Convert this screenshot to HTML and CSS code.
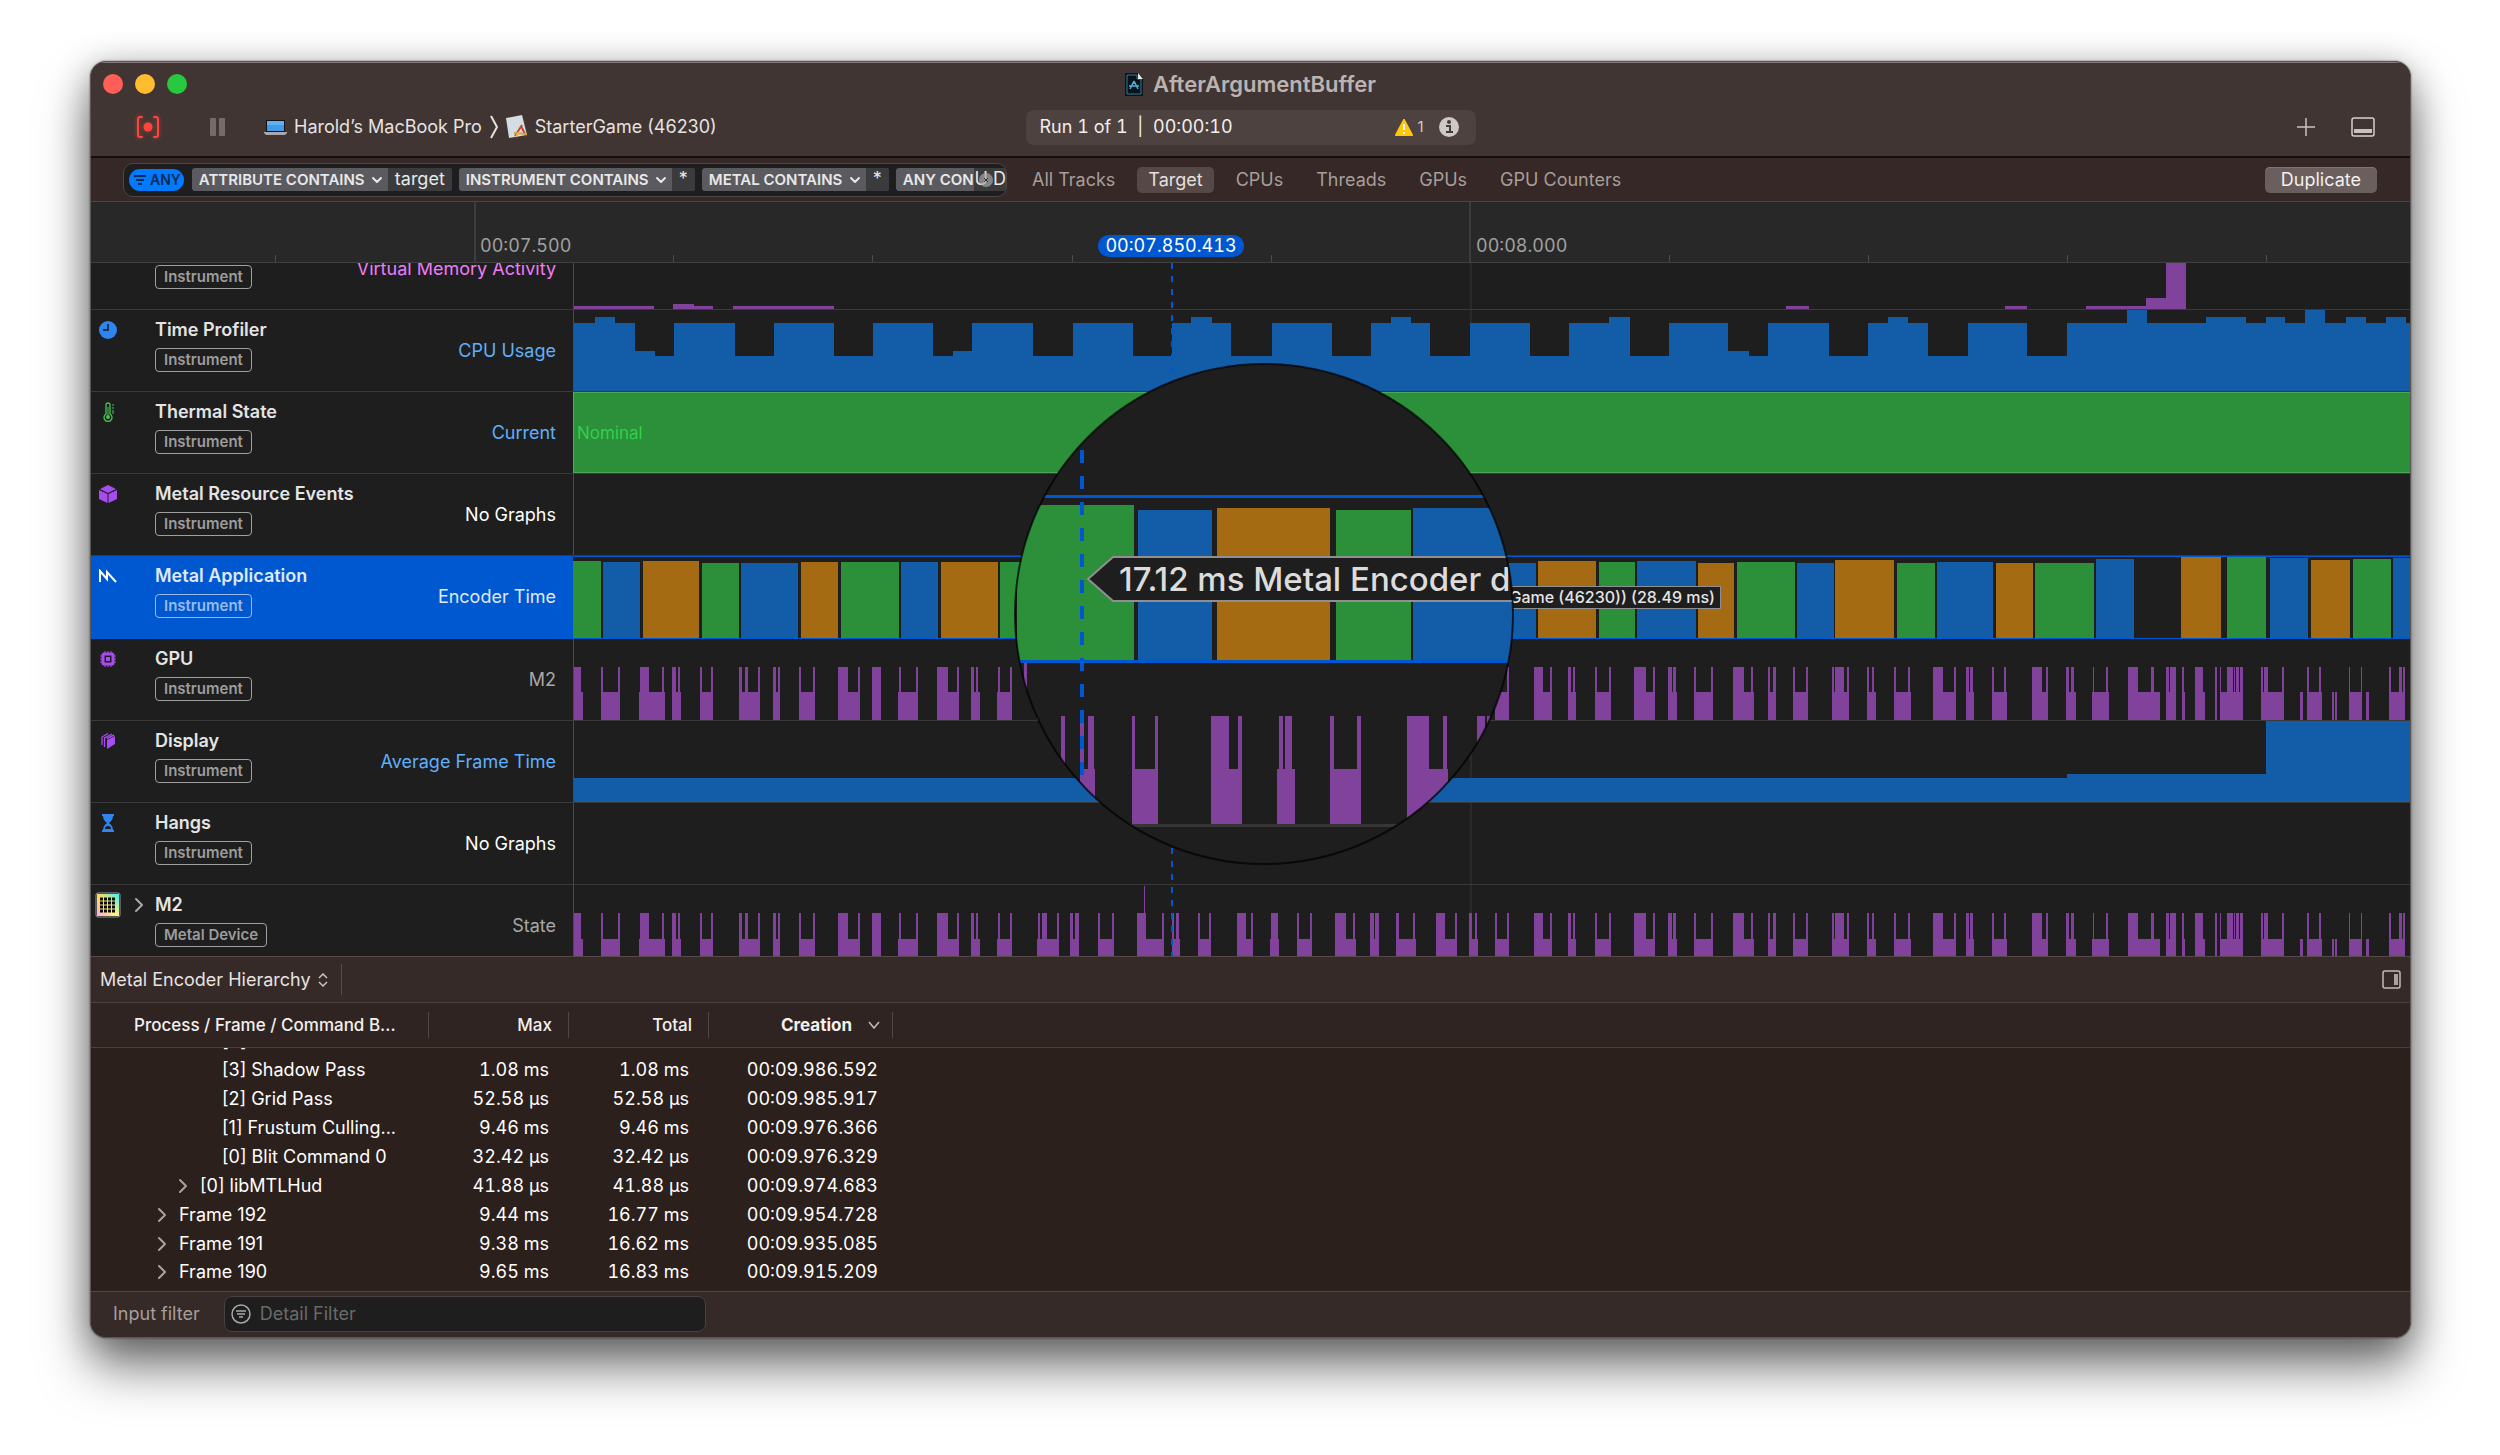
FILE: index.html
```html
<!DOCTYPE html>
<html lang="en">
<head>
<meta charset="utf-8">
<title>AfterArgumentBuffer</title>
<link rel="stylesheet" href="styles.css">
</head>
<body>
<svg class="defs" aria-hidden="true">
  <symbol id="chev-right" viewBox="0 0 10 16"><path d="M2 2l6 6-6 6" fill="none" stroke="currentColor" stroke-width="2" stroke-linecap="round" stroke-linejoin="round"/></symbol>
  <symbol id="chev-down" viewBox="0 0 12 8"><path d="M2 2l4 4 4-4" fill="none" stroke="currentColor" stroke-width="2" stroke-linecap="round" stroke-linejoin="round"/></symbol>
</svg>
<main class="window">
  <header class="titlebar">
    <div class="title-row">
      <div class="lights">
        <button class="light red" aria-label="Close"></button>
        <button class="light yellow" aria-label="Minimize"></button>
        <button class="light green" aria-label="Zoom"></button>
      </div>
      <h1 class="title">
        <svg width="18" height="23" viewBox="0 0 18 23"><path d="M0 0h13l5 5v18H0z" fill="#0b1218"/><path d="M2 2h10v4h4v15H2z" fill="none" stroke="#2d7f9e" stroke-width="1"/><path d="M13 0l5 6h-5z" fill="#e8e8e8"/><path d="M9 8l-4 8M9 8l4 8M4 13h10M9 8v3" stroke="#49b4d8" stroke-width="1.500" fill="none"/></svg>
        <span>AfterArgumentBuffer</span>
      </h1>
    </div>
    <div class="tool-row">
      <div class="tools-left">
        <button class="icon-btn record" aria-label="Record"><svg width="24" height="22" viewBox="0 0 24 22"><path d="M6 1H4Q2 1 2 3v16q0 2 2 2h2M18 1h2q2 0 2 2v16q0 2-2 2h-2" fill="none" stroke="#ff453a" stroke-width="2" stroke-linecap="round"/><circle cx="12" cy="11" r="4.500" fill="#ff453a"/></svg></button>
        <button class="icon-btn pause" aria-label="Pause"><svg width="16" height="18" viewBox="0 0 16 18"><rect width="6" height="18" rx="1" fill="#756b69"/><rect x="9" width="6" height="18" rx="1" fill="#756b69"/></svg></button>
        <button class="target-btn"><svg width="23" height="15" viewBox="0 0 23 15"><rect x="2" y="0" width="19" height="12" rx="1" fill="#111"/><rect x="3" y="1" width="17" height="10" fill="#3f9be6"/><path d="M3 1h17v4H3z" fill="#5fb2f0"/><path d="M0 12h23v1l-2 2H2l-2-2z" fill="#a9a9ab"/></svg><span>Harold’s MacBook Pro</span></button>
        <svg class="crumb" width="10" height="24" viewBox="0 0 10 24"><path d="M2 1l6 11-6 11" fill="none" stroke="#e6e2e1" stroke-width="2"/></svg>
        <button class="target-btn"><svg width="22" height="24" viewBox="0 0 22 24"><path d="M0 3L16 0l5 20L3 23z" fill="#d3dde2"/><path d="M9 21l7-11M20 21l-5-10" stroke="#c8452c" stroke-width="2"/><path d="M8 18l13 1" stroke="#d9a23c" stroke-width="2"/><path d="M10 22l3-5" stroke="#e9b550" stroke-width="2"/></svg><span>StarterGame (46230)</span></button>
      </div>
      <div class="status">
        <span class="run">Run 1 of 1&nbsp; |&nbsp; 00:00:10</span>
        <span class="issues"><svg width="18" height="17" viewBox="0 0 18 17"><path d="M9 1l8 15H1z" fill="#ffc60a" stroke="#ffc60a" stroke-width="2" stroke-linejoin="round"/><path d="M9 5v6M9 13v2" stroke="#fff" stroke-width="2"/></svg>1</span>
        <svg class="info" width="20" height="20" viewBox="0 0 20 20"><circle cx="10" cy="10" r="10" fill="#cfc8c6"/><circle cx="10" cy="5" r="2" fill="#463b39"/><path d="M7 9h4v6M7 15h7" fill="none" stroke="#463b39" stroke-width="2"/></svg>
      </div>
      <div class="tools-right">
        <button class="icon-btn" aria-label="Add instrument"><svg width="18" height="18" viewBox="0 0 18 18"><path d="M9 0v18M0 9h18" stroke="#c9c2c0" stroke-width="1.500"/></svg></button>
        <button class="icon-btn" aria-label="Toggle detail area"><svg width="24" height="20" viewBox="0 0 24 20"><rect x="1" y="1" width="22" height="18" rx="2" fill="none" stroke="#d6cfcd" stroke-width="1.500"/><rect x="3" y="12" width="18" height="4" fill="#c9c1bf"/></svg></button>
      </div>
    </div>
  </header>

  <nav class="filterbar">
    <div class="tokens">
      <button class="any"><svg width="12" height="10" viewBox="0 0 12 10"><path d="M0 1h12M2 5h8M4 9h4" stroke="#0b2a55" stroke-width="2"/></svg>ANY</button>
      <div class="token"><select aria-label="Attribute rule"><option>ATTRIBUTE CONTAINS</option></select><svg width="12" height="8"><use href="#chev-down"/></svg><span class="val">target</span></div>
      <div class="token"><select aria-label="Instrument rule"><option>INSTRUMENT CONTAINS</option></select><svg width="12" height="8"><use href="#chev-down"/></svg><span class="val">*</span></div>
      <div class="token"><select aria-label="Metal rule"><option>METAL CONTAINS</option></select><svg width="12" height="8"><use href="#chev-down"/></svg><span class="val">*</span></div>
      <div class="token last"><span class="cut">ANY CON</span><span class="val">PU D</span></div>
      <button class="clear" aria-label="Clear filter"><svg width="14" height="14" viewBox="0 0 14 14"><circle cx="7" cy="7" r="7" fill="#a5a5a5" fill-opacity=".7"/><path d="M5 5l4 4M9 5l-4 4" stroke="#333" stroke-width="1"/></svg></button>
    </div>
    <div class="scopes">
      <button class="scope">All Tracks</button>
      <button class="scope on">Target</button>
      <button class="scope">CPUs</button>
      <button class="scope">Threads</button>
      <button class="scope">GPUs</button>
      <button class="scope">GPU Counters</button>
    </div>
    <button class="duplicate">Duplicate</button>
  </nav>

  <section class="ruler">
    <svg class="ticks" viewBox="0 0 2319 60" preserveAspectRatio="none" shape-rendering="crispEdges"><path d="M383 0h2v60h-2zM1378 0h2v60h-2z" fill="#3d3d3d"/><path d="M184 53h1v7h-1zM582 53h1v7h-1zM781 53h1v7h-1zM981 53h1v7h-1zM1180 53h1v7h-1zM1578 53h1v7h-1zM1777 53h1v7h-1zM1976 53h1v7h-1zM2175 53h1v7h-1z" fill="#4c4c4c"/></svg>
    <span class="time t1">00:07.500</span>
    <span class="time t2">00:08.000</span>
    <span class="playtime">00:07.850.413</span>
  </section>

  <section class="tracks">
    <article class="track first">
      <div class="head"><div class="name"><span class="badge">Instrument</span></div><span class="metric pink">Virtual Memory Activity</span></div>
      <div class="graph"><svg id="vm" viewBox="0 0 1837 82"></svg></div>
    </article>
    <article class="track">
      <div class="head"><svg class="ico" width="18" height="18" viewBox="0 0 18 18"><circle cx="9" cy="9" r="9" fill="#2f84f0"/><path d="M9 3v6H4" fill="none" stroke="#16335c" stroke-width="2"/></svg><div class="name"><h2>Time Profiler</h2><span class="badge">Instrument</span></div><span class="metric sky">CPU Usage</span></div>
      <div class="graph"><svg id="cpu" viewBox="0 0 1837 82"></svg></div>
    </article>
    <article class="track">
      <div class="head"><svg class="ico" width="18" height="20" viewBox="0 0 18 20"><path d="M7 12V3q0-2 2-2t2 2v9a4 4 0 1 1-4 0z" fill="none" stroke="#46c352" stroke-width="1.300"/><circle cx="9" cy="15" r="2" fill="#46c352"/><path d="M9 5v9M13 3h2M13 6h2M13 9h2M13 11h2" stroke="#46c352" stroke-width="1"/></svg><div class="name"><h2>Thermal State</h2><span class="badge">Instrument</span></div><span class="metric sky">Current</span></div>
      <div class="graph thermal"><span>Nominal</span></div>
    </article>
    <article class="track">
      <div class="head"><svg class="ico" width="18" height="18" viewBox="0 0 18 18"><path d="M9 0l8 4-8 4-8-4zM0 5l8.500 4v9L0 14zM18 5l-8.500 4v9l8.500-4z" fill="#a64df0"/></svg><div class="name"><h2>Metal Resource Events</h2><span class="badge">Instrument</span></div><span class="metric">No Graphs</span></div>
      <div class="graph"></div>
    </article>
    <article class="track selected">
      <div class="head"><svg class="ico" width="18" height="14" viewBox="0 0 18 14"><path d="M1 13V2l7 8V3l9 10" fill="none" stroke="#fff" stroke-width="2"/></svg><div class="name"><h2>Metal Application</h2><span class="badge">Instrument</span></div><span class="metric">Encoder Time</span></div>
      <div class="graph"><svg id="encoder" viewBox="0 0 1837 82"></svg></div>
    </article>
    <article class="track">
      <div class="head"><svg class="ico" width="16" height="16" viewBox="0 0 16 16"><path d="M5 0v16M8 0v16M11 0v16M0 5h16M0 8h16M0 11h16" stroke="#a64df0" stroke-width="1"/><rect x="3" y="3" width="10" height="10" rx="1" fill="#1e1e1e" stroke="#a64df0" stroke-width="3"/><rect x="6" y="6" width="4" height="4" fill="#a64df0"/></svg><div class="name"><h2>GPU</h2><span class="badge">Instrument</span></div><span class="metric grey">M2</span></div>
      <div class="graph"><svg id="gpu" viewBox="0 0 1837 82"></svg></div>
    </article>
    <article class="track">
      <div class="head"><svg class="ico" width="14" height="16" viewBox="0 0 14 16"><path d="M6 7l8-4v8l-8 5z" fill="#a64df0"/><path d="M6 5.500l7-3.500" stroke="#a64df0" stroke-width="1.500"/><path d="M3.500 14V5L11 1M1 12V4l6-3.500" fill="none" stroke="#a64df0" stroke-width="1.300"/></svg><div class="name"><h2>Display</h2><span class="badge">Instrument</span></div><span class="metric sky">Average Frame Time</span></div>
      <div class="graph"><svg id="display" viewBox="0 0 1837 82"></svg></div>
    </article>
    <article class="track">
      <div class="head"><svg class="ico" width="12" height="18" viewBox="0 0 12 18"><path d="M0 0h12v2h-1q0 4-4 7 4 3 4 7h1v2H0v-2h1q0-4 4-7-4-3-4-7H0z" fill="#2f84f0"/><path d="M3 15q0-3 3-3t3 3z" fill="#1e1e1e"/></svg><div class="name"><h2>Hangs</h2><span class="badge">Instrument</span></div><span class="metric">No Graphs</span></div>
      <div class="graph"></div>
    </article>
    <article class="track last">
      <div class="head"><svg class="ico" width="26" height="26" viewBox="0 0 26 26"><defs><linearGradient id="device" x1="0" y1="0" x2="1" y2="1"><stop offset="0" stop-color="#ffd84a"/><stop offset="1" stop-color="#fff38a"/></linearGradient><linearGradient id="device2" x1="1" y1="0" x2="0" y2="1"><stop offset="0" stop-color="#3df0ff"/><stop offset=".5" stop-color="#3df0ff" stop-opacity="0"/><stop offset=".6" stop-color="#ff9bf0" stop-opacity="0"/><stop offset="1" stop-color="#ffa8f4"/></linearGradient></defs><rect x="1" y="1" width="24" height="24" rx="2" fill="#111" stroke="#9a9a9a"/><rect x="2" y="2" width="22" height="22" fill="url(#device)"/><rect x="2" y="2" width="22" height="22" fill="url(#device2)"/><path d="M5 7h16M5 11h16M5 15h16M5 19h16" stroke="#0c0c0c" stroke-width="3" stroke-dasharray="3 1"/></svg><button class="disclose" aria-label="Expand M2"><svg width="10" height="16"><use href="#chev-right"/></svg></button><div class="name"><h2>M2</h2><span class="badge">Metal Device</span></div><span class="metric grey">State</span></div>
      <div class="graph"><svg id="state" viewBox="0 0 1837 82"></svg></div>
    </article>

    <div class="playhead"></div>
    <div class="tip">Game (46230)) (28.49 ms)</div>
    <svg class="lens" width="504" height="506" viewBox="1012 361 504 506" role="img" aria-label="Magnified track detail">
      <defs><clipPath id="lens-clip"><ellipse cx="1264" cy="613" rx="249" ry="250"/></clipPath></defs>
      <g clip-path="url(#lens-clip)">
        <rect x="1012" y="361" width="504" height="506" fill="#1e1e1e"/>
        <g id="lens-bars" shape-rendering="crispEdges"></g>
        <path d="M1012 494h504v3h-504zM1017 659h499v3h-499z" fill="#0058d0"/>
        <path d="M1012 823h504v3h-504z" fill="#363636"/>
        <path d="M1082 449v338" stroke="#0058d0" stroke-width="4" stroke-dasharray="13 13"/>
        <path d="M1540 556H1113L1088 578l25 22h427z" fill="#1e1e1e" stroke="#8f8f92" stroke-width="2"/>
        <text class="lens-text" x="1119" y="590">17.12 ms Metal Encoder d</text>
      </g>
      <ellipse cx="1264" cy="613" rx="249" ry="250" fill="none" stroke="#000" stroke-opacity=".7" stroke-width="2"/>
    </svg>
  </section>

  <section class="detail">
    <div class="detail-bar">
      <label class="view"><select aria-label="Detail view"><option>Metal Encoder Hierarchy</option></select><svg width="10" height="14" viewBox="0 0 10 14"><path d="M1 5l4-4 4 4M1 9l4 4 4-4" fill="none" stroke="#c9c3c1" stroke-width="1.500"/></svg></label>
      <button class="icon-btn" aria-label="Toggle inspector"><svg width="19" height="19" viewBox="0 0 19 19"><rect x="1" y="1" width="17" height="17" rx="2" fill="none" stroke="#c3bcba" stroke-width="1.500"/><rect x="12" y="4" width="4" height="11" fill="#a9a2a0"/></svg></button>
    </div>
    <table class="grid">
      <colgroup><col class="c1"><col class="c2"><col class="c2"><col class="c3"><col></colgroup>
      <thead><tr><th class="proc"><span>Process / Frame / Command B...</span></th><th class="num"><span>Max</span></th><th class="num"><span>Total</span></th><th class="sorted"><span>Creation<svg width="12" height="8" viewBox="0 0 12 8"><path d="M1 1l5 6 5-6" fill="none" stroke="#c5bebc" stroke-width="1.500"/></svg></span></th><th></th></tr></thead>
      <tbody>
        <tr class="clipped"><td class="l3"><div><span>[4]</span></div></td><td></td><td></td><td></td><td></td></tr>
        <tr><td class="l3">[3] Shadow Pass</td><td>1.08 ms</td><td>1.08 ms</td><td>00:09.986.592</td><td></td></tr>
        <tr><td class="l3">[2] Grid Pass</td><td>52.58 µs</td><td>52.58 µs</td><td>00:09.985.917</td><td></td></tr>
        <tr><td class="l3">[1] Frustum Culling...</td><td>9.46 ms</td><td>9.46 ms</td><td>00:09.976.366</td><td></td></tr>
        <tr><td class="l3">[0] Blit Command 0</td><td>32.42 µs</td><td>32.42 µs</td><td>00:09.976.329</td><td></td></tr>
        <tr><td class="l2"><svg width="10" height="16"><use href="#chev-right"/></svg>[0] libMTLHud</td><td>41.88 µs</td><td>41.88 µs</td><td>00:09.974.683</td><td></td></tr>
        <tr><td class="l1"><svg width="10" height="16"><use href="#chev-right"/></svg>Frame 192</td><td>9.44 ms</td><td>16.77 ms</td><td>00:09.954.728</td><td></td></tr>
        <tr><td class="l1"><svg width="10" height="16"><use href="#chev-right"/></svg>Frame 191</td><td>9.38 ms</td><td>16.62 ms</td><td>00:09.935.085</td><td></td></tr>
        <tr><td class="l1"><svg width="10" height="16"><use href="#chev-right"/></svg>Frame 190</td><td>9.65 ms</td><td>16.83 ms</td><td>00:09.915.209</td><td></td></tr>
      </tbody>
    </table>
  </section>

  <footer class="footer">
    <label for="detail-filter">Input filter</label>
    <div class="field"><svg width="20" height="20" viewBox="0 0 20 20"><circle cx="10" cy="10" r="9" fill="none" stroke="#a8a8a8" stroke-width="1.500"/><path d="M5 7h10M6 10h8M8 13h4" stroke="#a8a8a8" stroke-width="1.500"/></svg><input id="detail-filter" type="text" placeholder="Detail Filter"></div>
  </footer>
</main>
<script src="timeline.js"></script>
</body>
</html>
```
FILE: styles.css
```css
* { box-sizing: border-box; }
body {
  margin: 0;
  padding: 61px 89px 118px 90px;
  background: #fff;
  font: 400 18px/20px Inter, "Liberation Sans", sans-serif;
  color: #e6e2e1;
}
button, select, input { font: inherit; color: inherit; margin: 0; padding: 0; border: 0; background: none; }
select { appearance: none; outline: 0; }
svg { display: block; flex: none; }
h1, h2 { margin: 0; }
.defs { position: absolute; width: 0; height: 0; }

.window {
  border: 1px solid #5d5856;
  border-radius: 16px;
  overflow: hidden;
  background: #2c201d;
  box-shadow: 0 0 2px rgba(0, 0, 0, .6), 0 30px 50px rgba(0, 0, 0, .5), 0 6px 34px rgba(0, 0, 0, .3);
}

/* title bar and toolbar */
.titlebar { background: #403533; border-bottom: 2px solid #170f0e; padding-bottom: 8px; box-shadow: inset 0 1px #857c7a; }
.title-row { display: grid; grid-template-columns: 1fr auto 1fr; align-items: center; height: 44px; padding: 0 12px; }
.lights { display: flex; gap: 12px; }
.light { width: 20px; height: 20px; border-radius: 50%; }
.red { background: #ff5f57; }
.yellow { background: #febc2e; }
.green { background: #28c840; }
.title { display: flex; align-items: center; gap: 10px; font-size: 22px; font-weight: 600; line-height: 24px; color: #bcb3b0; }
.tool-row { display: grid; grid-template-columns: 1fr 450px 1fr; align-items: center; height: 42px; }
.tools-left { display: flex; align-items: center; padding-left: 45px; }
.icon-btn { display: flex; }
.record { margin-right: 50px; filter: drop-shadow(0 0 2px rgba(255, 69, 58, .6)); }
.pause { margin-right: 38px; }
.target-btn { display: flex; align-items: center; gap: 7px; }
.crumb { margin: 0 7px; }
.status { display: flex; align-items: center; height: 35px; padding: 0 17px 0 14px; border-radius: 8px; background: #4d4240; color: #f1eeed; }
.run { flex: 1; font-variant-numeric: tabular-nums; }
.issues { display: flex; align-items: center; gap: 4px; margin-right: 15px; font-size: 15px; color: #cfc8c6; }
.tools-right { display: flex; justify-content: flex-end; align-items: center; gap: 36px; padding-right: 35px; }

/* filter bar */
.filterbar { display: flex; align-items: center; height: 44px; padding: 0 33px 0 32px; background: #352826; border-bottom: 1px solid #54423f; }
.tokens { position: relative; display: flex; align-items: center; gap: 7px; width: 884px; height: 34px; padding-left: 5px; overflow: hidden; border: 1px solid #4a4645; border-radius: 10px; background: #1e1e1e; font-size: 15px; font-weight: 600; }
.any { display: flex; align-items: center; gap: 4px; height: 22px; margin-right: 1px; padding: 0 3px 0 5px; border-radius: 11px; background: #007aff; color: #0b2a55; font-size: 14px; }
.token { display: flex; flex: none; align-items: center; height: 23px; overflow: hidden; border-radius: 3px; background: #5b5b5f; color: #e8e8e8; }
.token select { height: 23px; padding-left: 7px; }
.token svg { margin: 0 5px 0 6px; }
.val { height: 23px; padding: 0 7px; background: #3b3b3d; font-size: 18px; font-weight: 400; line-height: 22px; }
.token.last { flex: 1; min-width: 0; border-radius: 3px 0 0 3px; }
.cut { flex: none; padding-left: 7px; width: 78px; overflow: hidden; white-space: nowrap; }
.last .val { display: flex; flex: 1; min-width: 0; justify-content: flex-end; padding: 0; overflow: hidden; white-space: nowrap; }
.clear { position: absolute; right: 13px; top: 9px; }
.scopes { display: flex; flex: 1; gap: 11px; margin-left: 14px; }
.scope { height: 26px; padding: 0 11px; border-radius: 5px; color: #a79e9b; }
.scope.on { background: #554846; color: #e6e0de; }
.duplicate { height: 26px; padding: 0 16px; border-radius: 5px; background: #6a5f5c; box-shadow: inset 0 1px #80746f; color: #f3f0ef; }

/* ruler */
.ruler { position: relative; height: 61px; background: #282828; border-bottom: 1px solid #404040; font-variant-numeric: tabular-nums; }
.ticks { width: 100%; height: 60px; }
.time, .playtime { position: absolute; top: 34px; color: #a0a0a0; }
.t1 { left: 389px; }
.t2 { left: 1385px; }
.playtime { top: 33px; left: 1007px; width: 146px; border-radius: 11px; background: #0058d0; color: #fff; line-height: 22px; text-align: center; z-index: 1; }

/* tracks */
.tracks { position: relative; background: #1e1e1e; }
.track { display: flex; height: 82px; border-bottom: 1px solid #3a3a3a; overflow: hidden; }
.track.first { height: 47px; align-items: flex-end; }
.track.last { height: 71px; border-bottom: 0; }
.head { position: relative; display: flex; align-items: center; width: 482px; height: 81px; flex: none; padding: 0 17px 0 64px; }
.ico { position: absolute; left: 17px; top: 20px; transform: translate(-50%, -50%); }
.disclose { position: absolute; left: 43px; top: 12px; color: #a8a8a8; }
.name { flex: 1; align-self: flex-start; padding-top: 10px; }
.first .name { padding-top: 37px; }
h2 { margin-bottom: 8px; font-size: 18px; font-weight: 600; line-height: 20px; color: #e4e4e4; }
.badge { display: inline-block; padding: 0 8px; border: 1px solid #a0a0a0; border-radius: 4px; font-size: 15px; font-weight: 600; line-height: 22px; color: #9c9c9c; }
.metric { color: #fff; }
.pink { color: #ee7bf7; }
.sky { color: #5fb0fa; }
.grey { color: #a8a8a8; }
.track.selected { height: 83px; border-bottom-color: #0058d0; }
.selected .head { height: 82px; background: #0058d0; }
.selected h2, .selected .metric { color: #dfe9f8; }
.selected .badge { color: #96bbec; border-color: #96bbec; }
.graph { flex: 1; height: 81px; border-left: 1px solid #4a4a4a; background: linear-gradient(#2a2a2a, #2a2a2a) 896px 0 / 2px 100% no-repeat; }
.last .graph, .last .head, .selected .graph { height: 82px; }
.selected .graph { border-left: 0; box-shadow: inset 0 1px #0058d0; }
.graph svg { width: 100%; height: 100%; }
.thermal { display: flex; align-items: center; padding-left: 3px; background: #2c8f3a; border-left-color: #5aa862; box-shadow: inset 0 1px #4fa65b, inset 0 -1px #4fa65b; color: #32cf4c; font-size: 17px; }
.playhead { position: absolute; left: 1080px; top: 0; bottom: 0; width: 2px; background: repeating-linear-gradient(#0058d0 0 6px, transparent 6px 13px); }
.tip { position: absolute; left: 1400px; top: 323px; width: 230px; padding-right: 5px; border: 1px solid #8f8f92; background: #1e1e1e; font-size: 16px; font-weight: 500; line-height: 21px; text-align: right; white-space: nowrap; color: #e4e4e4; }
.lens { position: absolute; left: 921px; top: 99px; }
.lens-text { font: 500 33px Inter, "Liberation Sans", sans-serif; fill: #dcdcdc; }

/* detail area */
.detail-bar { display: flex; align-items: center; justify-content: space-between; height: 47px; padding-right: 9px; background: #352a27; border-top: 1px solid #564b48; border-bottom: 1px solid #4b403d; }
.view { display: flex; align-items: center; gap: 7px; height: 31px; padding: 0 13px 0 9px; border-right: 1px solid #564b48; }
.grid { width: 100%; table-layout: fixed; border-collapse: collapse; border-bottom: 6px solid #2c201d; }
.c1 { width: 338px; }
.c2 { width: 140px; }
.c3 { width: 184px; }
th { height: 44px; padding: 0; background: #2f2421; border-bottom: 1px solid #4b403d; font-size: 17px; font-weight: 500; text-align: left; color: #f3f0ef; }
th span { display: block; height: 26px; padding-right: 16px; border-right: 1px solid #514744; line-height: 26px; white-space: nowrap; }
.proc span { padding-left: 43px; }
.num span { text-align: right; }
.sorted span { display: flex; align-items: center; justify-content: flex-end; gap: 16px; padding-right: 12px; font-weight: 700; }
td { height: 29px; padding: 0 20px 0 0; text-align: right; white-space: nowrap; color: #fff; line-height: 20px; font-variant-numeric: tabular-nums; }
td:first-child { text-align: left; font-variant-numeric: normal; }
td:nth-child(4) { padding-right: 15px; }
td svg { display: inline-block; margin-right: 12px; vertical-align: -2px; color: #a8a2a0; }
td.l3 { padding-left: 131px; }
td.l2 { padding-left: 87px; }
td.l1 { padding-left: 66px; }
.clipped td { height: 8px; line-height: 8px; }
.clipped div { display: flex; align-items: flex-end; height: 8px; overflow: hidden; }
.clipped span { line-height: 29px; }

.footer { display: flex; align-items: center; gap: 24px; height: 46px; padding-left: 22px; background: #352a27; border-top: 1px solid #514744; color: #a79e9b; }
.field { display: flex; align-items: center; gap: 9px; width: 482px; height: 36px; padding-left: 6px; border: 1px solid #48413f; border-radius: 8px; background: #1e1e1e; }
.field input { flex: 1; outline: 0; color: #e6e2e1; }
.field input::placeholder { color: #6a6a6a; opacity: 1; }
```
FILE: timeline.js
```js
const BLUE = '#135ca8', GREEN = '#2c8f3a', ORANGE = '#a46b12', PURPLE = '#80429b';
const W = 1837, H = 82;

const box = (x0, x1, top, bottom) => `M${x0} ${top}H${x1}V${bottom}H${x0}z`;
const path = (d, fill) => `<path d="${d}" fill="${fill}"/>`;

function draw(id, markup) {
  const svg = document.getElementById(id);
  svg.setAttribute('preserveAspectRatio', 'none');
  svg.setAttribute('shape-rendering', 'crispEdges');
  svg.innerHTML = markup;
}

// Step series: [x, top] pairs, each level holds until the next x.
const steps = (list) => list.map(([x, top], i) =>
  box(x, i + 1 < list.length ? list[i + 1][0] : W, top, H)).join('');

draw('vm', path([[0, 80, 79], [99, 120, 77], [120, 139, 79], [159, 260, 79], [1213, 1236, 79],
  [1432, 1454, 79], [1513, 1573, 79], [1573, 1593, 71], [1593, 1613, 0]]
  .map(([a, b, t]) => box(a, b, t, H)).join(''), PURPLE));

draw('cpu', path(steps([[0, 13], [21, 7], [41, 13], [61, 41], [81, 47], [100, 13], [161, 47], [200, 13],
  [260, 47], [299, 13], [359, 47], [379, 41], [398, 13], [459, 47], [499, 13], [559, 47], [598, 13],
  [617, 7], [638, 13], [657, 47], [698, 13], [758, 47], [797, 13], [817, 7], [837, 13], [856, 47],
  [896, 13], [957, 47], [996, 13], [1036, 7], [1057, 47], [1096, 13], [1155, 41], [1176, 47],
  [1195, 13], [1256, 47], [1295, 13], [1315, 7], [1335, 13], [1355, 47], [1395, 13], [1454, 47],
  [1494, 13], [1554, 0], [1574, 13], [1633, 7], [1673, 13], [1693, 7], [1712, 13], [1732, 0],
  [1752, 13], [1773, 7], [1793, 13], [1813, 7], [1833, 13]]), BLUE));

draw('display', path(steps([[0, 58], [1494, 54], [1693, 0]]), BLUE));

const encoders = [[0, 28, 5, GREEN], [30, 67, 6, BLUE], [70, 126, 5, ORANGE], [129, 166, 7, GREEN],
  [168, 225, 7, BLUE], [228, 265, 6, ORANGE], [268, 326, 6, GREEN], [328, 365, 6, BLUE],
  [368, 425, 6, ORANGE], [427, 470, 6, GREEN], [900, 963, 7, BLUE], [965, 1023, 5, ORANGE],
  [1026, 1062, 6, GREEN], [1064, 1123, 5, BLUE], [1125, 1161, 7, ORANGE], [1164, 1222, 6, GREEN],
  [1224, 1261, 7, BLUE], [1262, 1321, 4, ORANGE], [1324, 1362, 7, GREEN], [1364, 1420, 6, BLUE],
  [1423, 1460, 7, ORANGE], [1462, 1521, 7, GREEN], [1523, 1561, 3, BLUE], [1608, 1648, 1, ORANGE],
  [1654, 1693, 1, GREEN], [1697, 1735, 2, BLUE], [1738, 1777, 4, ORANGE], [1780, 1818, 3, GREEN],
  [1820, 1837, 2, BLUE]];
draw('encoder', encoders.map(([a, b, t, c]) => path(box(a, b, t, H), c)).join(''));

// GPU occupancy: flat lists of start, end.
const low = [0,9,27,46,65,91,98,107,126,139,165,186,199,206,225,241,264,286,298,307,324,344,363,385,
  397,406,423,438,463,485,496,505,524,540,563,590,598,606,624,637,663,679,696,705,723,738,761,782,
  796,805,822,842,862,883,895,904,922,936,961,979,995,1003,1022,1038,1061,1082,1095,1104,1121,1140,
  1160,1181,1195,1203,1220,1235,1259,1276,1294,1303,1321,1338,1360,1383,1393,1401,1419,1434,
  1459,1475,1493,1503,1519,1536,1555,1587,1593,1603,1609,1612,1622,1632,1642,1644,1647,1670,
  1688,1711,1727,1730,1734,1749,1759,1761,1762,1764,1776,1789,1793,1796,1816,1832];
const high = [0,7,27,29,44,46,66,75,88,90,98,102,104,106,126,128,137,139,165,168,171,174,184,186,
  199,202,204,206,225,227,239,241,264,274,284,286,298,307,325,327,342,344,363,374,383,385,397,400,
  402,404,424,426,436,438,464,466,468,473,483,485,496,499,501,505,524,526,538,540,563,572,588,590,
  598,600,602,605,624,626,635,637,663,672,677,679,697,704,723,725,736,738,761,772,779,781,796,800,
  801,805,822,825,839,841,862,871,881,883,895,898,901,903,922,924,934,936,961,970,977,979,995,998,
  1000,1002,1022,1024,1036,1038,1061,1073,1080,1082,1095,1099,1100,1103,1121,1123,1138,1140,
  1160,1171,1178,1180,1195,1197,1200,1203,1220,1222,1233,1235,1259,1261,1262,1271,1274,1276,
  1294,1296,1299,1301,1321,1323,1335,1337,1360,1370,1381,1383,1393,1396,1397,1400,1419,1421,
  1431,1433,1459,1469,1473,1475,1493,1496,1498,1501,1520,1521,1533,1535,1555,1565,1578,1581,
  1593,1596,1597,1603,1609,1611,1622,1630,1642,1644,1647,1648,1654,1660,1661,1662,1663,1666,
  1667,1670,1688,1690,1691,1695,1709,1711,1734,1736,1746,1748,1776,1777,1788,1789,1816,1818,
  1826,1829,1830,1832];

function bars(list, top, bottom) {
  let d = '';
  for (let i = 0; i < list.length; i += 2) d += box(list[i], list[i + 1], top, bottom);
  return d;
}
const occupancy = bars(low, 54, H) + bars(high, 28, H);
draw('gpu', path(occupancy, PURPLE));
draw('state', path(occupancy + box(570, 571, 1, H), PURPLE));

// Magnified portion shown inside the lens.
document.getElementById('lens-bars').innerHTML =
  path(box(1017, 1134, 504, 659), GREEN) + path(box(1138, 1212, 509, 659), BLUE) +
  path(box(1217, 1330, 507, 659), ORANGE) + path(box(1336, 1411, 509, 659), GREEN) +
  path(box(1413, 1516, 507, 659), BLUE) +
  path(box(1024, 1027, 662, 710) +
    bars([1080,1095,1132,1158,1211,1242,1277,1295,1330,1361,1407,1448], 768, 823) +
    bars([1061,1065,1080,1084,1088,1094,1132,1135,1155,1158,1211,1229,1238,1242,1279,1283,1285,1292,
      1330,1334,1357,1361,1407,1429,1443,1447,1477,1485,1487,1490], 715, 823), PURPLE);
```
